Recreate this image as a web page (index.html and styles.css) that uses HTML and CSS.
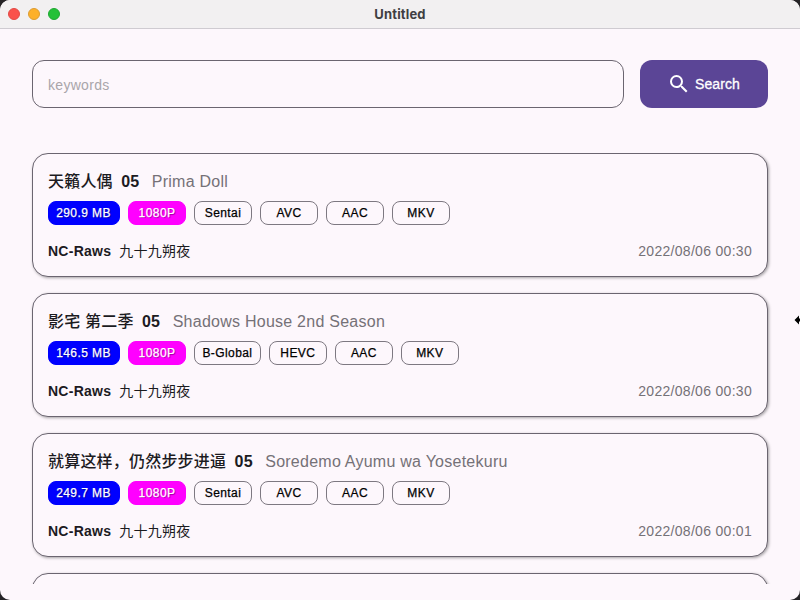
FILE: index.html
```html
<!DOCTYPE html>
<html lang="zh-CN">
<head>
<meta charset="utf-8">
<title>Untitled</title>
<link rel="stylesheet" href="styles.css">
</head>
<body>
<div class="window">
  <header class="titlebar">
    <div class="lights"><i class="light red"></i><i class="light yellow"></i><i class="light green"></i></div>
    <span class="window-title">Untitled</span>
  </header>
  <main class="content">
    <form class="search">
      <input class="field" type="text" placeholder="keywords">
      <button class="button" type="button">
        <svg class="icon" viewBox="0 0 24 24" fill="currentColor"><path d="M15.5 14h-.79l-.28-.27A6.471 6.471 0 0 0 16 9.5 6.5 6.5 0 1 0 9.5 16c1.61 0 3.09-.59 4.23-1.57l.27.28v.79l5 4.99L20.490 19l-4.99-5zm-6 0C7.010 14 5 11.990 5 9.500S7.010 5 9.500 5 14 7.010 14 9.500 11.990 14 9.500 14z"/></svg>
        <span>Search</span>
      </button>
    </form>
    <section class="list">
      <article class="card">
        <div class="heading"><span class="name">天籟人偶</span><b class="episode">05</b><span class="alias">Prima Doll</span></div>
        <div class="chips"><span class="chip size">290.9 MB</span><span class="chip quality">1080P</span><span class="chip">Sentai</span><span class="chip">AVC</span><span class="chip">AAC</span><span class="chip">MKV</span></div>
        <div class="meta"><b class="group">NC-Raws</b><span class="uploader">九十九朔夜</span><time class="date">2022/08/06 00:30</time></div>
      </article>
      <article class="card">
        <div class="heading"><span class="name">影宅 第二季</span><b class="episode">05</b><span class="alias">Shadows House 2nd Season</span></div>
        <div class="chips"><span class="chip size">146.5 MB</span><span class="chip quality">1080P</span><span class="chip">B-Global</span><span class="chip">HEVC</span><span class="chip">AAC</span><span class="chip">MKV</span></div>
        <div class="meta"><b class="group">NC-Raws</b><span class="uploader">九十九朔夜</span><time class="date">2022/08/06 00:30</time></div>
      </article>
      <article class="card">
        <div class="heading"><span class="name">就算这样，仍然步步进逼</span><b class="episode">05</b><span class="alias">Soredemo Ayumu wa Yosetekuru</span></div>
        <div class="chips"><span class="chip size">249.7 MB</span><span class="chip quality">1080P</span><span class="chip">Sentai</span><span class="chip">AVC</span><span class="chip">AAC</span><span class="chip">MKV</span></div>
        <div class="meta"><b class="group">NC-Raws</b><span class="uploader">九十九朔夜</span><time class="date">2022/08/06 00:01</time></div>
      </article>
      <article class="card"></article>
    </section>
  </main>
  <svg class="cursor" viewBox="0 0 6 12"><path d="M.5 6 5 1.500V4.500H7v3H5v3z" fill="#000" stroke="#fff" stroke-width="1" paint-order="stroke"/></svg>
</div>
</body>
</html>
```

FILE: styles.css
```css
* { box-sizing: border-box; }
body {
  margin: 0;
  background: #252326;
  font-family: "Liberation Sans", "Noto Sans CJK SC", sans-serif;
  color: #1c1b1f;
}
.window {
  position: relative;
  width: 800px;
  height: 600px;
  display: flex;
  flex-direction: column;
  overflow: hidden;
  border-radius: 10px;
  background: #fdf7fc;
}
.titlebar {
  flex: none;
  height: 29px;
  display: grid;
  grid-template-columns: 1fr auto 1fr;
  align-items: center;
  padding: 0 8px 1px;
  background: #f2f0f1;
  border-bottom: 1px solid #cfcbd1;
}
.lights { display: flex; gap: 8px; }
.light { width: 12px; height: 12px; border-radius: 50%; }
.red { background: #fa514b; border: 1px solid #e24a46; }
.yellow { background: #fdb02a; border: 1px solid #dc9c32; }
.green { background: #24c138; border: 1px solid #1fa832; }
.window-title {
  font: 700 13px/16px Inter, sans-serif;
  letter-spacing: .15px;
  color: #403e41;
}
.content {
  flex: 1;
  min-height: 0;
  display: flex;
  flex-direction: column;
  padding: 31px 16px 16px;
}
.search { flex: none; display: flex; gap: 16px; padding: 0 16px; }
.field {
  flex: 1;
  height: 48px;
  padding: 2px 15px 0;
  border: 1px solid #6b6570;
  border-radius: 12px;
  background: transparent;
  font: 14px "Liberation Sans", sans-serif;
  letter-spacing: .3px;
  outline: none;
}
.field::placeholder { color: #a9a5aa; opacity: 1; }
.button {
  width: 128px;
  height: 48px;
  display: flex;
  align-items: center;
  justify-content: center;
  gap: 4px;
  padding: 0 1px 0 0;
  border: 0;
  border-radius: 12px;
  background: #5b4596;
  color: #fff;
  font: 14px "Liberation Sans", sans-serif;
  letter-spacing: .1px;
  -webkit-text-stroke: .3px;
}
.icon { width: 24px; height: 24px; stroke: none; }
.list {
  flex: 1;
  min-height: 0;
  display: flex;
  flex-direction: column;
  gap: 16px;
  margin-top: 45px;
  padding: 0 16px;
  overflow: hidden;
}
.card {
  flex: none;
  height: 124px;
  padding: 15px;
  border: 1px solid #6b6570;
  border-radius: 16px;
  background: #fdf7fc;
  box-shadow: 1px 1px 3px rgba(0, 0, 0, .35);
}
.heading {
  display: flex;
  align-items: baseline;
  height: 25px;
  padding-top: 1px;
  line-height: 24px;
  font-size: 16px;
  letter-spacing: .15px;
  white-space: nowrap;
}
.name { font-weight: 500; letter-spacing: .2px; }
.episode { margin-left: 8.4px; }
.alias { margin-left: 12.5px; letter-spacing: .25px; color: #757177; }
.chips { display: flex; gap: 8px; margin-top: 7px; }
.chip {
  min-width: 58px;
  height: 24px;
  padding: 0 7.4px;
  border: 1px solid #7d7881;
  border-radius: 8px;
  font-size: 12px;
  line-height: 23px;
  letter-spacing: .42px;
  text-align: center;
  color: #000;
  -webkit-text-stroke: .25px;
}
.size, .quality { color: #fff; text-shadow: 1px 1px 1px rgba(0, 0, 0, .4); }
.size { width: 72px; padding: 0 7px 0 6px; background: #00f; border-color: #00f; }
.quality { background: #f0f; border-color: #f0f; }
.meta {
  display: flex;
  align-items: baseline;
  height: 20px;
  margin-top: 16px;
  line-height: 20px;
  font-size: 14px;
  letter-spacing: .25px;
}
.uploader { margin-left: 8px; }
.date { margin-left: auto; letter-spacing: .3px; color: #757177; }
.cursor { position: absolute; right: 0; top: 314px; width: 6px; height: 12px; }
```
